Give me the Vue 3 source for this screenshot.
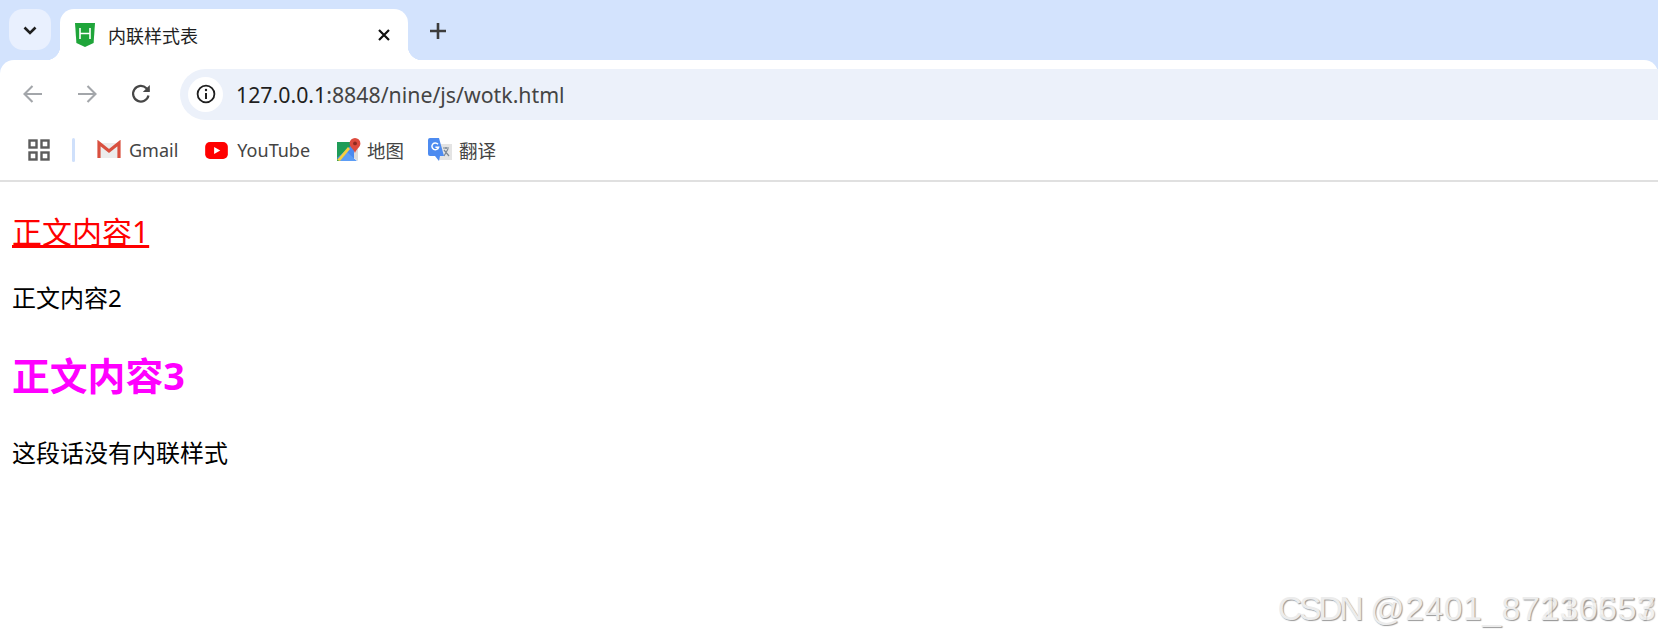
<template>
  <div class="page">
    <header class="chrome">
      <div class="strip">
        <button class="tab-search">
          <svg width="16" height="16" viewBox="0 0 16 16"><path d="M2.5 5.5 8 11 13.5 5.5" fill="none" stroke="#1f1f1f" stroke-width="2.6" /></svg>
        </button>
        <div class="tab">
          <svg class="favicon" width="20" height="24" viewBox="0 0 20 24">
            <path d="M0 0H20L18.6 20 10 24 1.4 20Z" fill="#1fa53a" />
            <path d="M5 5V16M15 5V16M5 10.5H15" fill="none" stroke="#fff" stroke-width="1.6" />
          </svg>
          <span class="tab-title">内联样式表</span>
          <svg class="close" width="14" height="14" viewBox="0 0 14 14"><path d="M2 2 12 12M12 2 2 12" stroke="#111" stroke-width="2.2" /></svg>
        </div>
        <svg class="plus" width="18" height="18" viewBox="0 0 18 18"><path d="M9 1V17M1 9H17" stroke="#3c3c3c" stroke-width="2.6" /></svg>
      </div>
      <div class="toolbar">
        <svg class="nav" width="24" height="24" viewBox="0 0 24 24"><path d="M21 12H4M11.5 4 3.5 12 11.5 20" fill="none" stroke="#a3a6aa" stroke-width="2.1" /></svg>
        <svg class="nav" width="24" height="24" viewBox="0 0 24 24"><path d="M3 12H20M12.5 4 20.5 12 12.5 20" fill="none" stroke="#a3a6aa" stroke-width="2.1" /></svg>
        <svg class="nav" width="24" height="24" viewBox="0 0 24 24">
          <path d="M19.5 13.5A7.8 7.8 0 1 1 17.4 6.2L20 8.8" fill="none" stroke="#474747" stroke-width="2.2" />
          <path d="M20.8 3V10H13.8Z" fill="#474747" />
        </svg>
        <div class="omnibox">
          <span class="info">
            <svg width="20" height="20" viewBox="0 0 20 20">
              <circle cx="10" cy="10" r="8.4" fill="none" stroke="#1f1f1f" stroke-width="1.8" />
              <path d="M10 9V15" stroke="#1f1f1f" stroke-width="2" />
              <circle cx="10" cy="6" r="1.2" fill="#1f1f1f" />
            </svg>
          </span>
          <span class="url"><b>127.0.0.1</b>:8848/nine/js/wotk.html</span>
        </div>
      </div>
      <div class="bookmarks">
        <svg class="apps" width="22" height="22" viewBox="0 0 22 22">
          <g fill="none" stroke="#5c5c5c" stroke-width="2.4">
            <rect x="1.5" y="1.5" width="7" height="7" />
            <rect x="13.5" y="1.5" width="7" height="7" />
            <rect x="1.5" y="13.5" width="7" height="7" />
            <rect x="13.5" y="13.5" width="7" height="7" />
          </g>
        </svg>
        <span class="divider"></span>
        <a class="mark gmail">
          <svg width="24" height="20" viewBox="0 0 24 20">
            <path d="M2 3H22V18H2Z" fill="#ececec" />
            <path d="M2 18V3L12 11 22 3V18" fill="none" stroke="#d9503f" stroke-width="3.2" />
          </svg>
          <span>Gmail</span>
        </a>
        <a class="mark youtube">
          <svg width="23" height="17" viewBox="0 0 24 18">
            <rect width="24" height="18" y="0" rx="5" fill="#f00" />
            <path d="M9.5 5.2V12.8L16 9Z" fill="#fff" />
          </svg>
          <span>YouTube</span>
        </a>
        <a class="mark maps">
          <svg width="24" height="24" viewBox="0 0 24 24">
            <path d="M0 4H17V23H0Z" fill="#1f9c58" />
            <path d="M0 20 17 5V23H3Z" fill="#4b8af0" />
            <path d="M10 14 20 23H3Z" fill="#5d9df5" />
            <path d="M0 22 11 9 13 11 3 23Z" fill="#f6cf3e" />
            <path d="M17 9H21V23L17 20Z" fill="#dcdcdc" />
            <path d="M18 0A5.4 5.4 0 0 1 23.4 5.4C23.4 9 19.5 10.5 18 15 16.5 10.5 12.6 9 12.6 5.4A5.4 5.4 0 0 1 18 0Z" fill="#dd4b3e" />
            <circle cx="18" cy="5.4" r="1.9" fill="#8f2a20" />
          </svg>
          <span>地图</span>
        </a>
        <a class="mark translate">
          <svg width="24" height="24" viewBox="0 0 24 24">
            <path d="M10 6H24V22H10Z" fill="#e4e4e4" />
            <path d="M15 10H21M18 9V11M16 18 20 11M16 12 21 18" fill="none" stroke="#7b8794" stroke-width="1.2" />
            <path d="M2 0H11L16 18H12L11 23 7 18H2A2 2 0 0 1 0 16V2A2 2 0 0 1 2 0Z" fill="#4d8bf0" />
            <path d="M10 6.2A3.4 3.4 0 1 0 10.6 9.2H7.4" fill="none" stroke="#fff" stroke-width="1.5" />
          </svg>
          <span>翻译</span>
        </a>
      </div>
    </header>
    <main class="content">
      <p class="first">正文内容1</p>
      <p class="second">正文内容2</p>
      <p class="third">正文内容3</p>
      <p class="fourth">这段话没有内联样式</p>
    </main>
    <div class="watermark">
      <span><span class="csdn">CSDN</span> @2401_87216557</span>
      <span class="ghost">130653</span>
    </div>
  </div>
</template>

<script setup>
</script>

<style>
html,
body {
  margin: 0;
  background: #fff;
  overflow: hidden;
}
</style>

<style scoped>
.page {
  position: relative;
  width: 1658px;
  height: 639px;
  overflow: hidden;
  background: #fff;
  font-family: "Noto Sans", "Noto Sans CJK SC", sans-serif;
  color: #000;
}
.chrome {
  background: #d3e3fd;
}
.strip {
  display: flex;
  align-items: flex-start;
  height: 51px;
  padding: 9px 0 0 9px;
}
.tab-search {
  width: 42px;
  height: 41px;
  padding: 0;
  border: 0;
  border-radius: 14px;
  background: #e9f0fe;
  display: flex;
  align-items: center;
  justify-content: center;
}
.tab {
  position: relative;
  display: flex;
  align-items: center;
  box-sizing: border-box;
  width: 348px;
  height: 51px;
  margin-left: 9px;
  padding: 0 17px 0 15px;
  background: #fff;
  border-radius: 14px 14px 0 0;
}
.tab::before,
.tab::after {
  content: "";
  position: absolute;
  bottom: 0;
  width: 14px;
  height: 14px;
}
.tab::before {
  left: -14px;
  background: radial-gradient(circle at 0 0, transparent 14px, #fff 14.5px);
}
.tab::after {
  right: -14px;
  background: radial-gradient(circle at 100% 0, transparent 14px, #fff 14.5px);
}
.favicon {
  flex: none;
}
.tab-title {
  margin-left: 13px;
  flex: 1;
  font-size: 18px;
  color: #1f1f1f;
}
.plus {
  margin: 13px 0 0 21px;
}
.toolbar {
  display: flex;
  align-items: center;
  box-sizing: border-box;
  height: 60px;
  padding: 8px 0 0 21px;
  background: #fff;
  border-radius: 14px 14px 0 0;
}
.nav {
  margin-right: 30px;
}
.nav:nth-child(3) {
  margin-right: 27px;
}
.omnibox {
  flex: 1;
  display: flex;
  align-items: center;
  height: 51px;
  padding-left: 8px;
  background: #ecf1fa;
  border-radius: 26px 0 0 26px;
}
.info {
  display: flex;
  align-items: center;
  justify-content: center;
  width: 35px;
  height: 35px;
  border-radius: 50%;
  background: #fff;
}
.url {
  margin-left: 13px;
  font-size: 21.3px;
  color: #444;
}
.url b {
  font-weight: 400;
  color: #1f1f1f;
}
.bookmarks {
  display: flex;
  align-items: center;
  height: 60px;
  padding-left: 28px;
  background: #fff;
  border-bottom: 2px solid #e0e0e0;
}
.divider {
  width: 3px;
  height: 24px;
  margin: 0 22px 0 22px;
  border-radius: 2px;
  background: #cfe0fb;
}
.mark {
  display: flex;
  align-items: center;
  gap: 8px;
  margin-right: 27px;
  font-size: 18px;
  color: #444;
}
.youtube {
  gap: 9px;
  margin-right: 27px;
}
.maps {
  gap: 6px;
  margin-right: 24px;
}
.translate {
  gap: 7px;
}
.maps,
.translate {
  font-size: 18.5px;
}
.content {
  padding-left: 12px;
}
.content p {
  margin: 0;
}
.first {
  padding-top: 29px;
  font-size: 30px;
  line-height: 42px;
  color: #f00;
  text-decoration: underline;
}
.second {
  margin-top: 28px !important;
  font-size: 24px;
  line-height: 34px;
}
.third {
  margin-top: 35px !important;
  font-size: 37.8px;
  line-height: 52px;
  font-weight: 700;
  color: #f0f;
}
.fourth {
  margin-top: 34px !important;
  font-size: 24px;
  line-height: 34px;
}
.watermark {
  position: absolute;
  right: 2px;
  top: 589px;
  font-family: "Liberation Sans", Arial, sans-serif;
  font-size: 33.8px;
  line-height: 38px;
  letter-spacing: 0.5px;
  white-space: nowrap;
  color: #ececec;
  text-shadow: 1px 1px 1px #999, -1px -1px 0 #fff;
}
.csdn {
  letter-spacing: -3.3px;
}
.ghost {
  position: absolute;
  right: 0;
  top: 0;
  opacity: 0.7;
}
</style>
